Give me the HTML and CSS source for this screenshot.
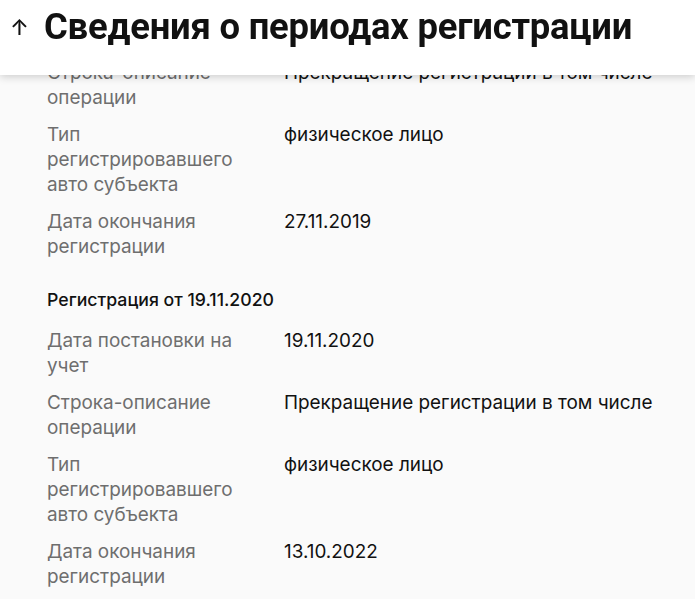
FILE: index.html
```html
<!DOCTYPE html>
<html lang="ru">
<head>
<meta charset="utf-8">
<link rel="stylesheet" href="styles.css">
</head>
<body>
<header class="topbar">
  <span class="arrow">↑</span>
  <h1 class="title">Сведения о периодах регистрации</h1>
</header>
<main class="content">
  <dl class="rows">
    <dt>Строка-описание операции</dt><dd>Прекращение регистрации в том числе</dd>
    <dt>Тип регистрировавшего авто субъекта</dt><dd>физическое лицо</dd>
    <dt>Дата окончания регистрации</dt><dd>27.11.2019</dd>
  </dl>
  <h2 class="section">Регистрация от 19.11.2020</h2>
  <dl class="rows">
    <dt>Дата постановки на учет</dt><dd>19.11.2020</dd>
    <dt>Строка-описание операции</dt><dd>Прекращение регистрации в том числе</dd>
    <dt>Тип регистрировавшего авто субъекта</dt><dd>физическое лицо</dd>
    <dt>Дата окончания регистрации</dt><dd>13.10.2022</dd>
  </dl>
</main>
</body>
</html>
```
FILE: styles.css
```css
html, body {
  margin: 0;
  padding: 0;
  background: #fafafa;
  font-family: Inter, "Noto Sans", sans-serif;
  color: #111;
}
.topbar {
  position: fixed;
  top: 0;
  left: 0;
  right: 0;
  height: 75px;
  background: #fff;
  box-shadow: 0 2px 8px rgba(0,0,0,0.18);
  display: flex;
  align-items: flex-start;
  padding: 6px 0 0 10px;
  box-sizing: border-box;
  z-index: 2;
}
.arrow {
  font-size: 22px;
  line-height: 42px;
  width: 34px;
  font-weight: 500;
}
.title {
  margin: 0;
  font-family: Roboto, Inter, sans-serif;
  font-weight: 700;
  font-size: 36.4px;
  line-height: 42px;
  letter-spacing: -0.2px;
}
.content {
  padding: 60px 20px 0 47px;
}
.rows {
  margin: 0;
  display: grid;
  grid-template-columns: 200px 1fr;
  column-gap: 37px;
  row-gap: 12px;
  font-size: 18.9px;
  line-height: 25px;
}
.rows dt {
  color: #6e6e6e;
}
.rows dd {
  margin: 0;
  color: #111;
}
.section {
  margin: 28px 0 16px;
  font-size: 17.7px;
  line-height: 25px;
  font-weight: 500;
}
```
